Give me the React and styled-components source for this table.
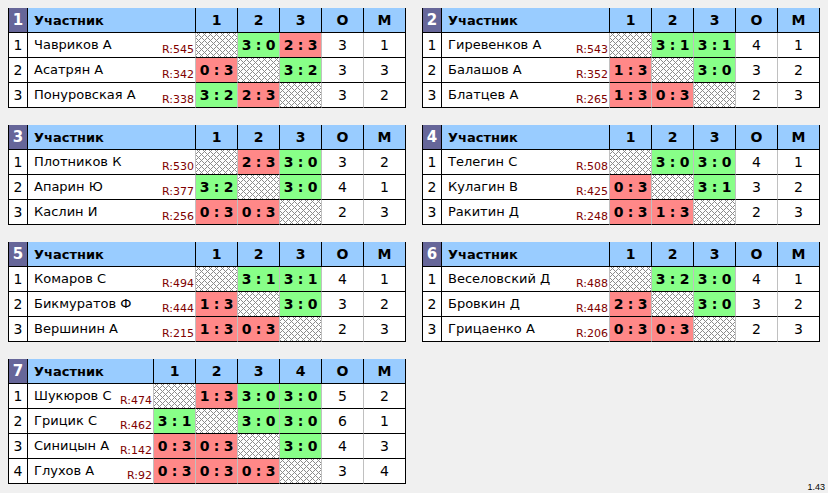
import React from 'react';
import styled, { createGlobalStyle, css } from 'styled-components';

const GlobalStyle = createGlobalStyle`
  html, body {
    margin: 0;
    padding: 0;
    background: #f0f0f0;
  }
  body {
    font-family: "DejaVu Sans", "Liberation Sans", sans-serif;
    color: #000;
  }
`;

const Page = styled.div`
  display: grid;
  grid-template-columns: 398px 398px;
  column-gap: 16px;
  row-gap: 17px;
  padding: 8px;
  align-items: start;
`;

const Table = styled.div`
  width: 398px;
  box-sizing: border-box;
  border-left: 1px solid #000;
  background: #fff;
`;

const Row = styled.div`
  display: grid;
  grid-template-columns: ${p => p.$cols};
  height: 25px;
`;

const cellBase = css`
  box-sizing: border-box;
  height: 25px;
  border-bottom: 1px solid #000;
  display: flex;
  align-items: center;
  justify-content: center;
`;

const HeadCell = styled.div`
  ${cellBase};
  background: #99ccff;
  border-right: 1px solid #000;
  font-weight: bold;
  justify-content: ${p => (p.$left ? 'flex-start' : 'center')};
  padding-left: ${p => (p.$left ? '6px' : '0')};
  font-size: ${p => (p.$left ? '13px' : '14px')};
`;

const GroupNum = styled(HeadCell)`
  background: #666699;
  color: #fff;
  font-size: 15px;
`;

const NumCell = styled.div`
  ${cellBase};
  border-right: 1px solid #000;
  font-size: 14px;
`;

const NameCell = styled.div`
  ${cellBase};
  border-right: 1px solid #c0c0c0;
  justify-content: space-between;
  align-items: stretch;
  padding-left: 6px;
  padding-right: 1px;
`;

const Name = styled.span`
  font-size: 13px;
  line-height: 16px;
  padding-top: 4px;
  white-space: nowrap;
`;

const Rating = styled.span`
  align-self: flex-end;
  font-size: 11px;
  line-height: 13px;
  color: #800000;
  padding-bottom: 1px;
  white-space: nowrap;
`;

const ScoreCell = styled.div`
  ${cellBase};
  border-right: 1px solid #c0c0c0;
  font-weight: bold;
  font-size: 14px;
  letter-spacing: -0.3px;
  white-space: pre;
  background: ${p => (p.$win ? '#88ff88' : '#ff8888')};
`;

const SelfCell = styled.div`
  ${cellBase};
  border-right: 1px solid #c0c0c0;
  background-color: #fff;
  background-image:
    repeating-linear-gradient(45deg, #8c8c8c 0 1.2px, transparent 1.2px 4.25px),
    repeating-linear-gradient(-45deg, #8c8c8c 0 1.2px, transparent 1.2px 4.25px);
`;

const StatCell = styled.div`
  ${cellBase};
  border-right: 1px solid ${p => (p.$last ? '#000' : '#c0c0c0')};
  font-size: 14px;
`;

const Version = styled.div`
  grid-column: 2;
  justify-self: end;
  align-self: end;
  font-family: "Liberation Sans", sans-serif;
  font-size: 9px;
  margin-right: -5px;
  margin-bottom: -8px;
`;

const groups = [
  {
    n: 1,
    players: [
      ['Чавриков А', 545, [null, '3:0', '2:3'], 3, 1],
      ['Асатрян А', 342, ['0:3', null, '3:2'], 3, 3],
      ['Понуровская А', 338, ['3:2', '2:3', null], 3, 2],
    ],
  },
  {
    n: 2,
    players: [
      ['Гиревенков А', 543, [null, '3:1', '3:1'], 4, 1],
      ['Балашов А', 352, ['1:3', null, '3:0'], 3, 2],
      ['Блатцев А', 265, ['1:3', '0:3', null], 2, 3],
    ],
  },
  {
    n: 3,
    players: [
      ['Плотников К', 530, [null, '2:3', '3:0'], 3, 2],
      ['Апарин Ю', 377, ['3:2', null, '3:0'], 4, 1],
      ['Каслин И', 256, ['0:3', '0:3', null], 2, 3],
    ],
  },
  {
    n: 4,
    players: [
      ['Телегин С', 508, [null, '3:0', '3:0'], 4, 1],
      ['Кулагин В', 425, ['0:3', null, '3:1'], 3, 2],
      ['Ракитин Д', 248, ['0:3', '1:3', null], 2, 3],
    ],
  },
  {
    n: 5,
    players: [
      ['Комаров С', 494, [null, '3:1', '3:1'], 4, 1],
      ['Бикмуратов Ф', 444, ['1:3', null, '3:0'], 3, 2],
      ['Вершинин А', 215, ['1:3', '0:3', null], 2, 3],
    ],
  },
  {
    n: 6,
    players: [
      ['Веселовский Д', 488, [null, '3:2', '3:0'], 4, 1],
      ['Бровкин Д', 448, ['2:3', null, '3:0'], 3, 2],
      ['Грицаенко А', 206, ['0:3', '0:3', null], 2, 3],
    ],
  },
  {
    n: 7,
    players: [
      ['Шукюров С', 474, [null, '1:3', '3:0', '3:0'], 5, 2],
      ['Грицик С', 462, ['3:1', null, '3:0', '3:0'], 6, 1],
      ['Синицын А', 142, ['0:3', '0:3', null, '3:0'], 4, 3],
      ['Глухов А', 92, ['0:3', '0:3', '0:3', null], 3, 4],
    ],
  },
];

const Group = ({ n, players }) => {
  const size = players.length;
  const nameWidth = 168 - (size - 3) * 42;
  const cols = `19px ${nameWidth}px repeat(${size}, 42px) 42px 42px`;
  return (
    <Table>
      <Row $cols={cols}>
        <GroupNum>{n}</GroupNum>
        <HeadCell $left>Участник</HeadCell>
        {players.map((_, i) => (
          <HeadCell key={i}>{i + 1}</HeadCell>
        ))}
        <HeadCell>О</HeadCell>
        <HeadCell>М</HeadCell>
      </Row>
      {players.map(([name, rating, scores, points, place], i) => (
        <Row $cols={cols} key={name}>
          <NumCell>{i + 1}</NumCell>
          <NameCell>
            <Name>{name}</Name>
            <Rating>R:{rating}</Rating>
          </NameCell>
          {scores.map((s, j) => {
            if (!s) return <SelfCell key={j} />;
            const [a, b] = s.split(':').map(Number);
            return (
              <ScoreCell key={j} $win={a > b}>
                {`${a} : ${b}`}
              </ScoreCell>
            );
          })}
          <StatCell>{points}</StatCell>
          <StatCell $last>{place}</StatCell>
        </Row>
      ))}
    </Table>
  );
};

export default function App() {
  return (
    <>
      <GlobalStyle />
      <Page>
        {groups.map(g => (
          <Group key={g.n} {...g} />
        ))}
        <Version>1.43</Version>
      </Page>
    </>
  );
}
